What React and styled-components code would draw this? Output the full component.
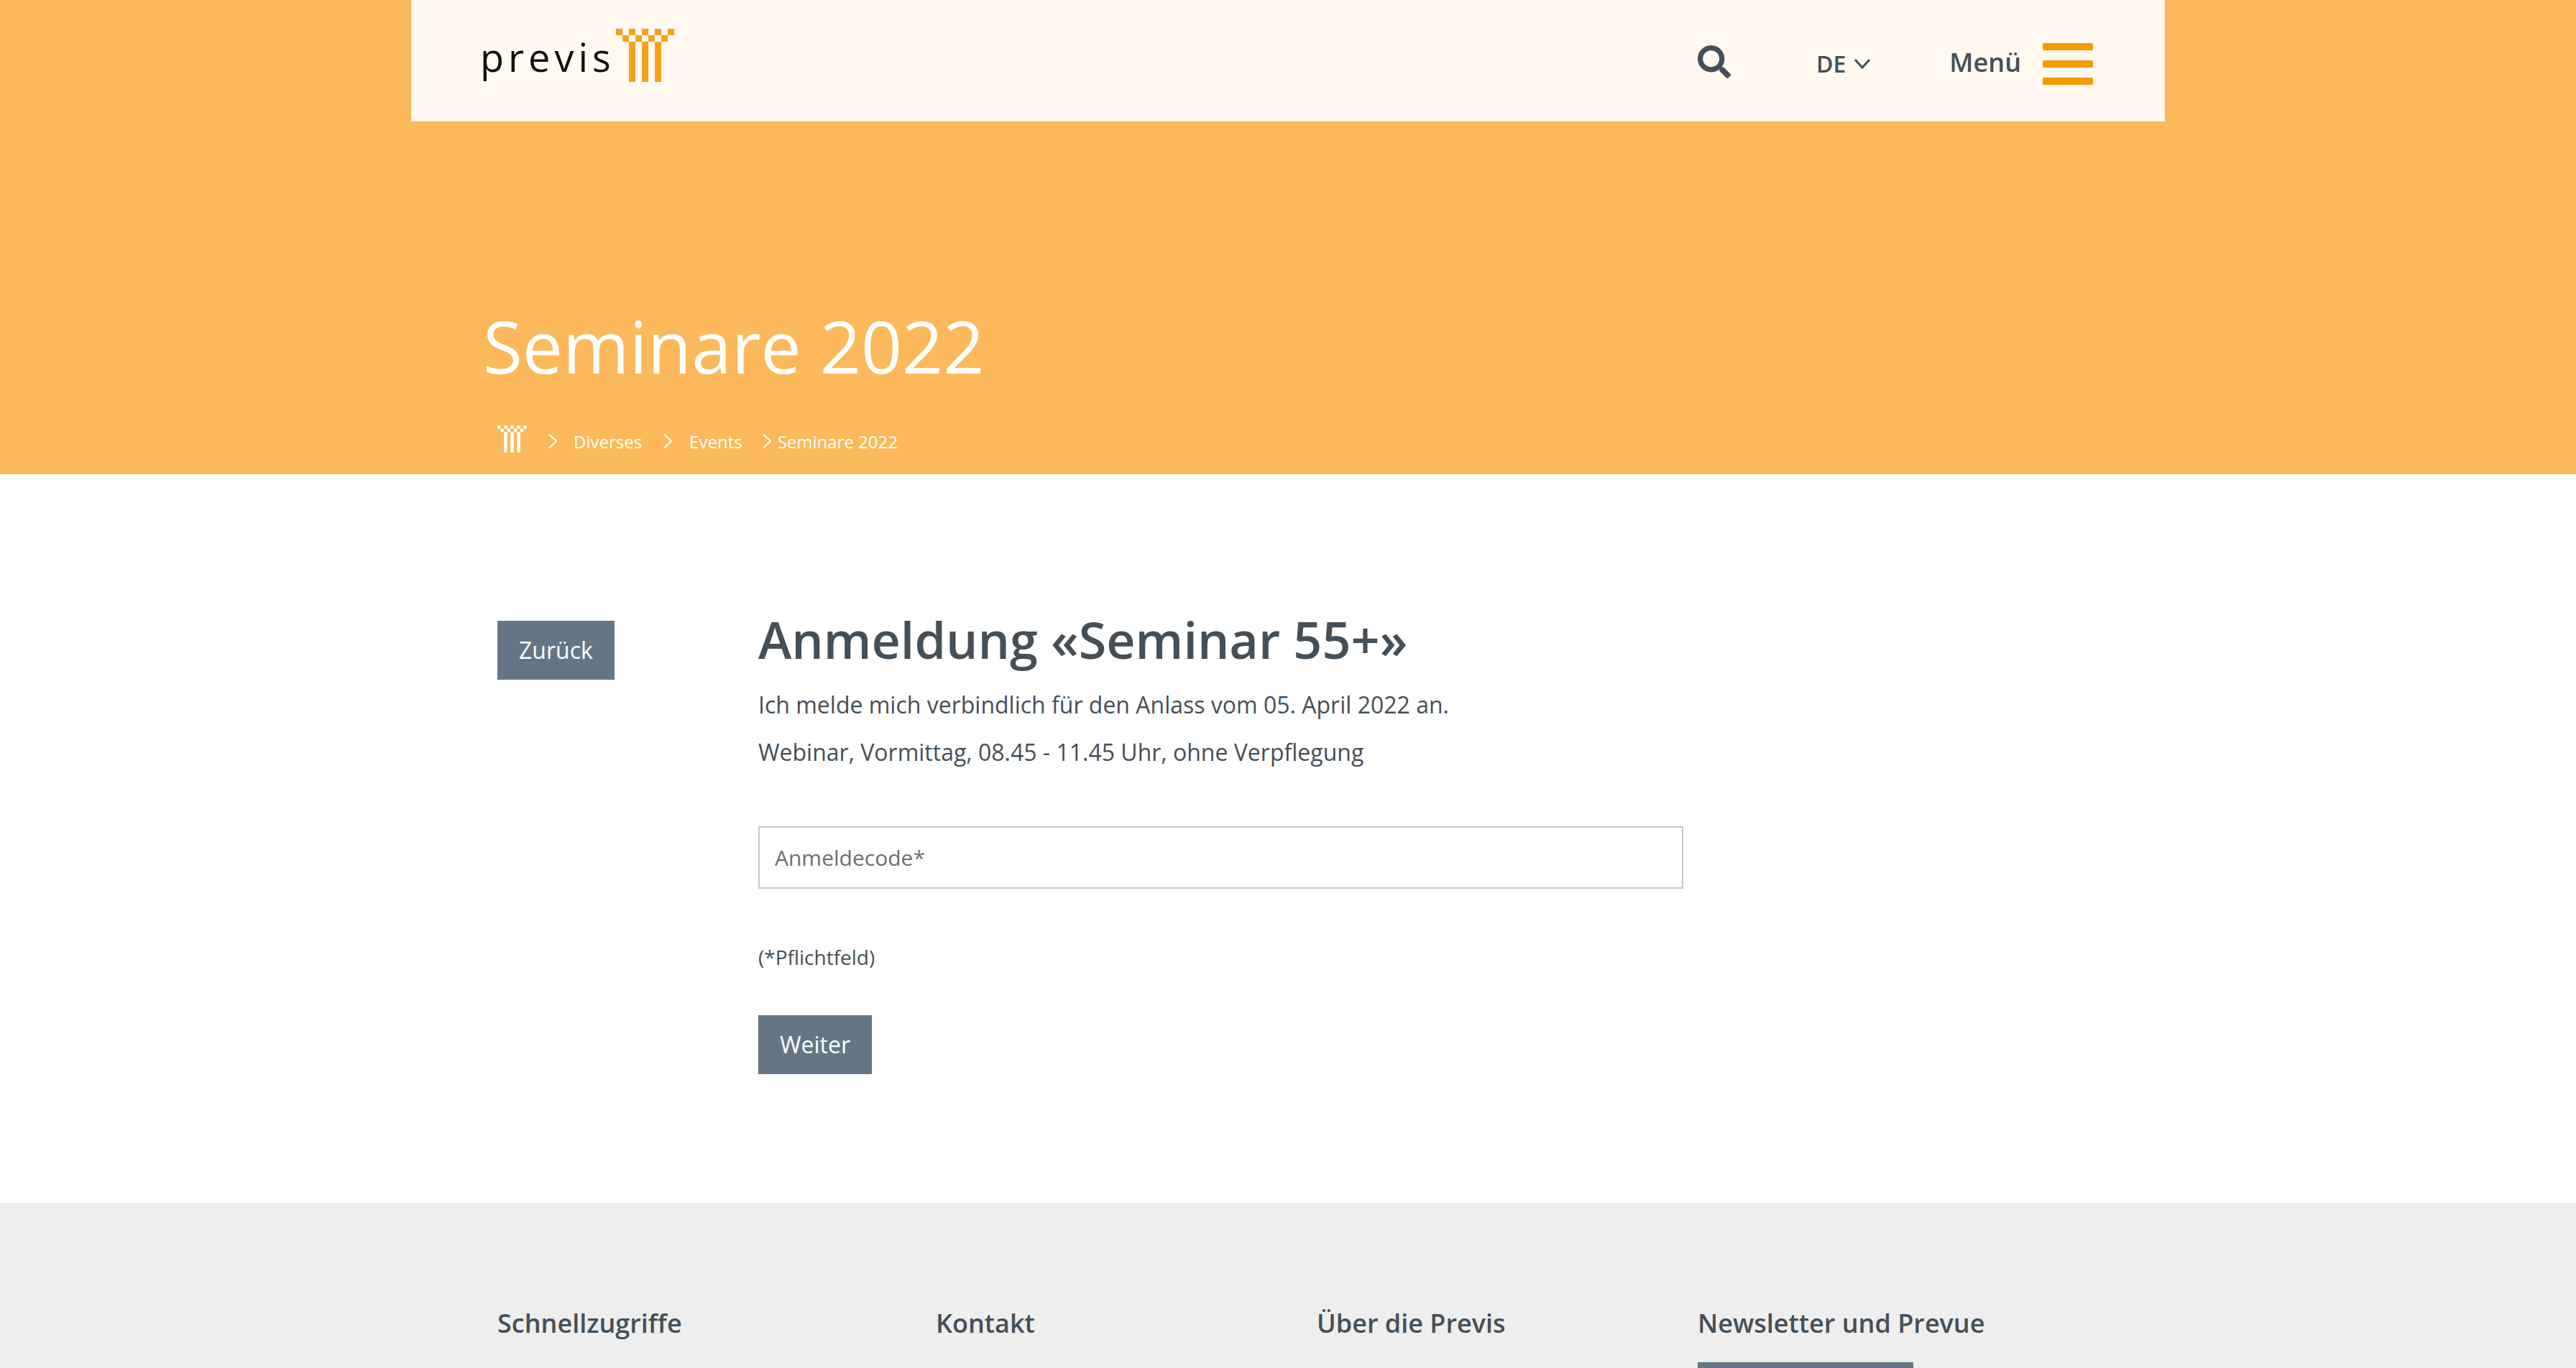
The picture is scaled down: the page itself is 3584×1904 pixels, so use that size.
import React from "react";
import styled, { createGlobalStyle } from "styled-components";
import { FaSearch } from "react-icons/fa";

const GlobalStyle = createGlobalStyle`
  html, body {
    margin: 0;
    height: 1904px;
    overflow: hidden;
    background: #fff;
    color: #454f57;
    font-family: "Open Sans", "Noto Sans", sans-serif;
  }
  * { box-sizing: border-box; }
`;

const Hero = styled.header`
  height: 660px;
  background: #fcb95b;
`;

const NavBar = styled.nav`
  width: 2440px;
  height: 169px;
  margin: 0 auto;
  padding: 0 100px;
  background: #fff9f0;
  display: flex;
  align-items: center;
`;

const Brand = styled.a`
  display: flex;
  align-items: flex-start;
  height: 74px;
  margin: -15px 0 0 -4px;
`;

const BrandName = styled.span`
  width: 189px;
  flex: none;
  font-size: 54px;
  line-height: 74px;
  font-weight: 400;
  letter-spacing: 6px;
  color: #111;
  padding-top: 2px;
`;

const MarkSvg = styled.svg`
  display: block;
  flex: none;
`;

const NavTools = styled.div`
  margin-left: auto;
  display: flex;
  align-items: center;
`;

const SearchButton = styled.span`
  display: flex;
  color: #454f57;
  font-size: 46px;
  margin-right: 119px;
  margin-top: 2px;
`;

const LangSwitch = styled.span`
  display: flex;
  align-items: center;
  gap: 12px;
  font-size: 32px;
  font-weight: 600;
  margin-right: 110px;
  margin-top: 8px;
`;

const MenuLabel = styled.span`
  font-size: 36px;
  font-weight: 600;
  margin-right: 30px;
  margin-top: 4px;
`;

const Burger = styled.span`
  width: 70px;
  margin-top: 9px;
  display: flex;
  flex-direction: column;
  gap: 14px;
  & > i {
    display: block;
    height: 10px;
    border-radius: 2px;
    background: #f59a00;
  }
`;

const HeroInner = styled.div`
  width: 2440px;
  margin: 0 auto;
  padding: 0 100px;
`;

const HeroTitle = styled.h1`
  margin: 0;
  padding-top: 247px;
  font-size: 100px;
  line-height: 130px;
  font-weight: 400;
  color: #fff;
`;

const Crumbs = styled.div`
  display: flex;
  align-items: center;
  margin: 0 0 0 20px;
  padding-top: 42px;
  font-size: 24px;
  line-height: 38px;
  color: #fff;
`;

const CrumbLink = styled.span`
  margin-left: ${(p) => p.$gap}px;
  margin-top: 8px;
`;

const CrumbArrow = styled.svg`
  display: block;
  margin-left: ${(p) => p.$gap}px;
  margin-top: 6px;
`;

const Main = styled.main`
  height: 1014px;
  padding: 204px 0 0 692px;
  display: flex;
  align-items: flex-start;
`;

const Button = styled.a`
  display: inline-block;
  height: 82px;
  padding: 0 30px;
  background: #647686;
  color: #fff;
  font-size: 32px;
  line-height: 82px;
`;

const BackColumn = styled.div`
  width: 363px;
  flex: none;
`;

const FormColumn = styled.div`
  width: 1287px;
`;

const Heading = styled.h2`
  margin: -22px 0 10px;
  font-size: 70px;
  line-height: 96px;
  font-weight: 600;
`;

const Lead = styled.p`
  margin: 0;
  font-size: 32px;
  line-height: 66px;
`;

const CodeInput = styled.input`
  display: block;
  width: 100%;
  height: 87px;
  margin-top: 70px;
  padding: 0 21px;
  border: 2px solid #c8c8c8;
  background: #fff;
  font-family: inherit;
  font-size: 30px;
  color: #454f57;
  &::placeholder {
    color: #6e6e6e;
    opacity: 1;
  }
`;

const RequiredNote = styled.p`
  margin: 69px 0 0;
  font-size: 28px;
  line-height: 52px;
`;

const SubmitRow = styled.div`
  display: flex;
  margin-top: 55px;
`;

const Footer = styled.footer`
  height: 230px;
  background: #eee;
  padding: 143px 0 0 692px;
  display: flex;
  align-items: flex-start;
`;

const FooterColumn = styled.div`
  width: ${(p) => p.$width}px;
  flex: none;
`;

const FooterTitle = styled.h3`
  margin: 0;
  font-size: 36px;
  line-height: 50px;
  font-weight: 600;
`;

const NewsletterBar = styled.div`
  width: 300px;
  height: 82px;
  margin-top: 29px;
  background: #647686;
`;

const Mark = ({ color, width, height }) => (
  <MarkSvg width={width} height={height} viewBox="0 0 81 74" fill={color}>
    {[0, 18, 36, 54, 72].map((x) => (
      <rect key={x} x={x} y="0" width="9" height="9" />
    ))}
    {[9, 27, 45, 63].map((x) => (
      <rect key={x} x={x} y="9" width="9" height="9" />
    ))}
    {[18, 36, 54].map((x) => (
      <rect key={x} x={x} y="18" width="9" height="56" />
    ))}
  </MarkSvg>
);

const Arrow = ({ gap }) => (
  <CrumbArrow $gap={gap} width="12" height="20" viewBox="0 0 12 20" fill="none" stroke="#fff" strokeWidth="2">
    <path d="M1 0.5 L11 10 L1 19.5" />
  </CrumbArrow>
);

export default function App() {
  return (
    <>
      <GlobalStyle />
      <Hero>
        <NavBar>
          <Brand>
            <BrandName>previs</BrandName>
            <Mark color="#f7a11a" width={81} height={74} />
          </Brand>
          <NavTools>
            <SearchButton>
              <FaSearch />
            </SearchButton>
            <LangSwitch>
              DE
              <svg width="22" height="14" viewBox="0 0 22 14" fill="none" stroke="#454f57" strokeWidth="3">
                <path d="M1 1 L11 12 L21 1" />
              </svg>
            </LangSwitch>
            <MenuLabel>Menü</MenuLabel>
            <Burger>
              <i />
              <i />
              <i />
            </Burger>
          </NavTools>
        </NavBar>
        <HeroInner>
          <HeroTitle>Seminare 2022</HeroTitle>
          <Crumbs>
            <Mark color="#fff" width={41} height={38} />
            <Arrow gap={30} />
            <CrumbLink $gap={23}>Diverses</CrumbLink>
            <Arrow gap={30} />
            <CrumbLink $gap={24}>Events</CrumbLink>
            <Arrow gap={28} />
            <CrumbLink $gap={9}>Seminare 2022</CrumbLink>
          </Crumbs>
        </HeroInner>
      </Hero>
      <Main>
        <BackColumn>
          <Button>Zurück</Button>
        </BackColumn>
        <FormColumn>
          <Heading>Anmeldung «Seminar 55+»</Heading>
          <Lead>Ich melde mich verbindlich für den Anlass vom 05. April 2022 an.</Lead>
          <Lead>Webinar, Vormittag, 08.45 - 11.45 Uhr, ohne Verpflegung</Lead>
          <CodeInput placeholder="Anmeldecode*" />
          <RequiredNote>(*Pflichtfeld)</RequiredNote>
          <SubmitRow>
            <Button>Weiter</Button>
          </SubmitRow>
        </FormColumn>
      </Main>
      <Footer>
        <FooterColumn $width={610}>
          <FooterTitle>Schnellzugriffe</FooterTitle>
        </FooterColumn>
        <FooterColumn $width={530}>
          <FooterTitle>Kontakt</FooterTitle>
        </FooterColumn>
        <FooterColumn $width={530}>
          <FooterTitle>Über die Previs</FooterTitle>
        </FooterColumn>
        <FooterColumn $width={650}>
          <FooterTitle>Newsletter und Prevue</FooterTitle>
          <NewsletterBar />
        </FooterColumn>
      </Footer>
    </>
  );
}
